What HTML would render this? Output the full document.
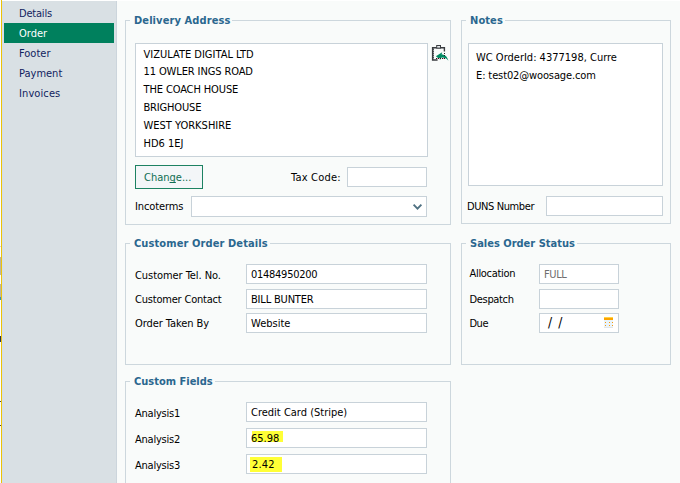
<!DOCTYPE html>
<html lang="en">
<head>
<meta charset="utf-8">
<title>Sales Order - Order</title>
<style>
html,body{margin:0;padding:0;}
body{width:680px;height:483px;overflow:hidden;position:relative;background:#f9fbfa;
 font-family:"DejaVu Sans Condensed","Liberation Sans",sans-serif;font-size:11px;color:#000;}
*{box-sizing:border-box;}
.abs{position:absolute;}
#topline{left:2px;top:0;width:678px;height:1px;background:#fff;}
#edge0{left:0;top:0;width:1px;height:483px;background:#fdfdfb;}
#edge1{left:1px;top:0;width:1px;height:483px;background:#ecc307;}
#edge2{left:2px;top:1px;width:1px;height:482px;background:#d3dde9;}
#side{left:3px;top:1px;width:114px;height:482px;background:#d9e0e4;border-right:1px solid #ccd5dc;}
.nav{position:absolute;left:4px;width:110px;height:20px;line-height:22px;padding-left:15px;color:#11235f;font-size:11px;white-space:pre;}
.nav.sel{background:#00805d;color:#fff;}
.grp{position:absolute;border:1px solid #cdd7dd;}
.ttl{position:absolute;font-weight:bold;color:#2b678f;font-size:11px;background:#f9fbfa;white-space:pre;line-height:14px;height:14px;padding:0 2px 0 4px;margin-top:1px;letter-spacing:0.1px;}
.box{position:absolute;background:#fff;border:1px solid #c8d2d9;}
.t{position:absolute;white-space:pre;line-height:14px;height:14px;margin-top:1px;}
.hl{position:absolute;background:#ffff36;}
</style>
</head>
<body>
<div class="abs" id="side"></div>
<div class="abs" id="edge2"></div>
<div class="abs" id="edge1"></div>
<div class="abs" id="edge0"></div>
<div class="abs" id="topline"></div>

<div class="abs" style="left:0;top:246px;width:1px;height:1px;background:#d5d5d5"></div>
<div class="abs" style="left:0;top:257px;width:1px;height:18px;background:#bdb6a4"></div>
<div class="abs" style="left:0;top:284px;width:1px;height:13px;background:#bdb6a4"></div>
<div class="abs" style="left:0;top:297px;width:1px;height:3px;background:#2f8fc4"></div>
<div class="abs" style="left:0;top:336px;width:1px;height:6px;background:#2a3350"></div>
<div class="abs" style="left:0;top:401px;width:1px;height:1px;background:#444"></div>
<div class="abs" style="left:0;top:425px;width:1px;height:1px;background:#444"></div>
<div class="nav" style="top:3px;letter-spacing:-0.2px">Details</div>
<div class="nav sel" style="top:23px">Order</div>
<div class="nav" style="top:43px">Footer</div>
<div class="nav" style="top:63px">Payment</div>
<div class="nav" style="top:83px;letter-spacing:0.1px">Invoices</div>

<!-- Delivery Address -->
<div class="grp" style="left:125px;top:20px;width:326px;height:205px"></div>
<div class="ttl" style="left:130px;top:13px">Delivery Address</div>
<div class="box" style="left:135px;top:43px;width:293px;height:114px"></div>
<div class="t" style="left:143.5px;top:47px">VIZULATE DIGITAL LTD</div>
<div class="t" style="left:143.5px;top:64px;letter-spacing:-0.11px">11 OWLER INGS ROAD</div>
<div class="t" style="left:143.5px;top:82px;letter-spacing:-0.12px">THE COACH HOUSE</div>
<div class="t" style="left:143.5px;top:100px;letter-spacing:-0.17px">BRIGHOUSE</div>
<div class="t" style="left:143.5px;top:118px">WEST YORKSHIRE</div>
<div class="t" style="left:143.5px;top:136px">HD6 1EJ</div>

<div class="box" style="left:135px;top:165px;width:68px;height:24px;background:#f3f6f8;border-color:#1d8262"></div>
<div class="t" style="left:144px;top:170px;color:#0f6e53">Chan<span style="text-decoration:underline;text-decoration-skip-ink:none">g</span>e...</div>
<div class="t" style="left:291px;top:170px;letter-spacing:0.2px">Tax Code:</div>
<div class="box" style="left:347px;top:167px;width:80px;height:20px"></div>
<div class="t" style="left:135px;top:199px;letter-spacing:-0.1px">Incoterms</div>
<div class="box" style="left:191px;top:196px;width:236px;height:21px"></div>
<svg class="abs" style="left:412px;top:203px" width="11" height="8" viewBox="0 0 11 8"><path d="M1.6 1.7 L5.5 5.6 L9.4 1.7" fill="none" stroke="#4f7182" stroke-width="1.9"/></svg>

<svg class="abs" style="left:430px;top:44px" width="20" height="19" viewBox="0 0 20 19">
<path d="M2.7 3.8 H14.4 V7.4" fill="none" stroke="#3a3d40" stroke-width="1.4"/>
<path d="M2.7 3.1 V16 H7.6" fill="none" stroke="#3a3d40" stroke-width="1.6"/>
<path d="M2.2 5.5h1.6M2.2 7.5h1.6M2.2 9.5h1.6M2.2 11.5h1.6M2.2 13.5h1.6" stroke="#3a3d40" stroke-width="1" fill="none"/>
<rect x="6.7" y="1.5" width="3.8" height="2.6" fill="#e8ecee" stroke="#3a3d40" stroke-width="1"/>
<path d="M5.9 12.2 L12.2 8.2 L11.6 10.4 C15 10.4 17.4 12.6 18.4 16.8 C16.6 14.2 14.4 13.4 11.6 13.5 L10.2 15.8 Z" fill="#008a62"/>
<path d="M6 14.5h1M8 14.5h1M10 14.5h1M12 14.5h1M14 14.5h1M14 9.5h1M14 11.5h1" stroke="#222" stroke-width="1" fill="none"/>
<path d="M7 14.5h1M9 14.5h1M13 14.5h1" stroke="#f3a0b5" stroke-width="1" fill="none"/>
</svg>
<!-- Notes -->
<div class="grp" style="left:461px;top:20px;width:210px;height:204px"></div>
<div class="ttl" style="left:466px;top:13px">Notes</div>
<div class="box" style="left:468px;top:43px;width:195px;height:143px"></div>
<div class="t" style="left:476px;top:50px">WC OrderId: 4377198, Curre</div>
<div class="t" style="left:476px;top:68px;letter-spacing:-0.12px">E: test02@woosage.com</div>
<div class="t" style="left:467px;top:199px;letter-spacing:-0.4px">DUNS Number</div>
<div class="box" style="left:546px;top:196px;width:117px;height:20px"></div>

<!-- Customer Order Details -->
<div class="grp" style="left:125px;top:243px;width:326px;height:122px"></div>
<div class="ttl" style="left:130px;top:236px">Customer Order Details</div>
<div class="t" style="left:135px;top:268px;letter-spacing:-0.06px">Customer Tel. No.</div>
<div class="t" style="left:135px;top:292px;letter-spacing:-0.2px">Customer Contact</div>
<div class="t" style="left:135px;top:316px;letter-spacing:-0.07px">Order Taken By</div>
<div class="box" style="left:246px;top:264px;width:181px;height:20px"></div>
<div class="box" style="left:246px;top:289px;width:181px;height:20px"></div>
<div class="box" style="left:246px;top:313px;width:181px;height:20px"></div>
<div class="t" style="left:251px;top:267px;letter-spacing:-0.27px">01484950200</div>
<div class="t" style="left:251px;top:292px;letter-spacing:-0.18px">BILL BUNTER</div>
<div class="t" style="left:251px;top:316px">Website</div>

<!-- Sales Order Status -->
<div class="grp" style="left:461px;top:243px;width:210px;height:122px"></div>
<div class="ttl" style="left:466px;top:236px;letter-spacing:0">Sales Order Status</div>
<div class="t" style="left:469.5px;top:266px;letter-spacing:-0.3px">Allocation</div>
<div class="t" style="left:469.5px;top:292px;letter-spacing:-0.33px">Despatch</div>
<div class="t" style="left:469.5px;top:316px;letter-spacing:-0.5px">Due</div>
<div class="box" style="left:539px;top:264px;width:80px;height:20px"></div>
<div class="box" style="left:539px;top:289px;width:80px;height:20px"></div>
<div class="box" style="left:539px;top:313px;width:80px;height:20px"></div>
<div class="t" style="left:544px;top:267px;color:#6e6e6e;letter-spacing:-0.4px">FULL</div>
<div class="t" style="left:548px;top:313px;font-size:13.6px;line-height:16px;height:16px;word-spacing:2.2px">/ /</div>

<svg class="abs" style="left:604px;top:317px" width="9" height="11" viewBox="0 0 9 11">
<rect x="0" y="0" width="9" height="11" fill="#eaf4fa"/>
<rect x="0" y="0" width="9" height="1" fill="#ffd348"/>
<rect x="0" y="1" width="9" height="2" fill="#fba400"/>
<path d="M1 5.5h1M5 5.5h1M8 5.5h1M1 8.5h1M5 8.5h1M8 8.5h1" stroke="#f99a0a" stroke-width="1" fill="none"/>
<rect x="0" y="10" width="9" height="1" fill="#e3e6e8"/>
</svg>
<!-- Custom Fields -->
<div class="grp" style="left:125px;top:381px;width:326px;height:140px"></div>
<div class="ttl" style="left:130px;top:374px;letter-spacing:0">Custom Fields</div>
<div class="t" style="left:135px;top:406px;letter-spacing:-0.22px">Analysis1</div>
<div class="t" style="left:135px;top:432px;letter-spacing:-0.22px">Analysis2</div>
<div class="t" style="left:135px;top:458px;letter-spacing:-0.22px">Analysis3</div>
<div class="box" style="left:246px;top:402px;width:181px;height:20px"></div>
<div class="box" style="left:246px;top:428px;width:181px;height:20px"></div>
<div class="box" style="left:246px;top:454px;width:181px;height:20px"></div>
<div class="hl" style="left:252px;top:431px;width:31px;height:11px"></div>
<div class="hl" style="left:250px;top:457px;width:32px;height:15px"></div>
<div class="t" style="left:251px;top:405px">Credit Card (Stripe)</div>
<div class="t" style="left:251px;top:431px">65.98</div>
<div class="t" style="left:252px;top:457px;letter-spacing:0.2px">2.42</div>
</body>
</html>
